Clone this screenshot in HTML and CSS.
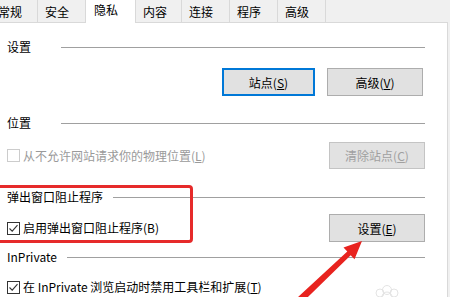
FILE: index.html
```html
<!DOCTYPE html>
<html lang="zh-CN">
  <head>
    <meta charset="UTF-8" />
    <meta name="viewport" content="width=device-width, initial-scale=1.0" />
    <title>Internet 选项 - 隐私</title>
    <link rel="stylesheet" href="styles.css">
  </head>
  <body>
    <div class="tabs">
      <div class="tab first">常规</div>
      <div class="tab">安全</div>
      <div class="tab active">隐私</div>
      <div class="tab narrow">内容</div>
      <div class="tab">连接</div>
      <div class="tab">程序</div>
      <div class="tab">高级</div>
    </div>

    <div class="panel">
      <!-- 设置 -->
      <div class="group group-settings">
        <div class="group-title"><span>设置</span><i class="rule"></i></div>
        <div class="row end">
          <button class="btn focused">站点(<u>S</u>)</button>
          <button class="btn wide">高级(<u>V</u>)</button>
        </div>
      </div>

      <!-- 位置 -->
      <div class="group group-location">
        <div class="group-title"><span>位置</span><i class="rule"></i></div>
        <div class="row">
          <label class="check disabled"><span class="box"></span><span>从不允许网站请求你的物理位置(<u>L</u>)</span></label>
          <button class="btn wide disabled short">清除站点(<u>C</u>)</button>
        </div>
      </div>

      <!-- 弹出窗口阻止程序 -->
      <div class="group group-popup">
        <div class="group-title"><span>弹出窗口阻止程序</span><i class="rule"></i></div>
        <div class="row">
          <label class="check"><span class="box"><svg viewBox="0 0 13 13" width="13" height="13"><path d="M2.5 6.5 L5.2 9.2 L10.5 3.2" fill="none" stroke="#333" stroke-width="1.1"/></svg></span><span>启用弹出窗口阻止程序(B)</span></label>
          <button class="btn wide">设置(<u>E</u>)</button>
        </div>
      </div>

      <!-- InPrivate -->
      <div class="group group-private">
        <div class="group-title"><span>InPrivate</span><i class="rule"></i></div>
        <div class="row line">
          <label class="check"><span class="box"><svg viewBox="0 0 13 13" width="13" height="13"><path d="M2.5 6.5 L5.2 9.2 L10.5 3.2" fill="none" stroke="#333" stroke-width="1.1"/></svg></span><span>在 InPrivate 浏览启动时禁用工具栏和扩展(<u>T</u>)</span></label>
        </div>
      </div>
    </div>

    <!-- annotations drawn over the screenshot -->
    <div class="highlight"></div>
    <svg class="marks" viewBox="0 0 450 297" width="450" height="297">
      <polygon points="362,241 343.5,247.6 347.3,251.6 297.5,297.5 302.3,302.5 350.7,255.2 354.5,259.2" fill="#e8231f"/>
      <g fill="none" stroke="#e4e4e4" stroke-width="1">
        <circle cx="380" cy="293" r="4"/>
        <circle cx="387" cy="290" r="4.5"/>
        <circle cx="394" cy="293" r="4"/>
        <circle cx="387" cy="297" r="5"/>
      </g>
    </svg>
  </body>
</html>
```

FILE: styles.css
```css
body {
  margin: 0;
  width: 450px;
  height: 297px;
  overflow: hidden;
  position: relative;
  background-color: #f0f0f0;
  font-family: "Noto Sans CJK SC", "Microsoft YaHei", sans-serif;
  font-size: 12px;
  color: #000;
}

.tabs {
  display: flex;
  align-items: flex-end;
  height: 22px;
  margin-left: -9px;
}

.tab {
  box-sizing: border-box;
  width: 48px;
  height: 22px;
  padding: 2px 0 0 7px;
  line-height: 20px;
  background-color: #f0f0f0;
  border-right: 1px solid #d9d9d9;
}

.tab.first {
  width: 47px;
}

.tab.narrow {
  width: 46px;
}

.tab.active {
  width: 50px;
  height: 23px;
  padding: 0 0 0 8px;
  margin-bottom: -1px;
  line-height: 20px;
  background-color: #fff;
  position: relative;
  z-index: 1;
}

.panel {
  box-sizing: border-box;
  width: 448px;
  height: 275px;
  background-color: #fff;
  border-top: 1px solid #d9d9d9;
  border-right: 1px solid #d9d9d9;
  padding: 14px 22px 0 7px;
}

.group-title {
  display: flex;
  align-items: center;
  height: 20px;
  line-height: 20px;
}

.group-title span {
  min-width: 44px;
  margin-right: 10px;
}

.rule {
  flex: 1;
  height: 1px;
  background-color: #a0a0a0;
}

.row {
  display: flex;
  align-items: center;
  justify-content: space-between;
}

.row.end {
  justify-content: flex-end;
  gap: 12px;
}

.group-settings .row {
  margin-top: 11px;
  margin-right: 2px;
}

.group-location {
  margin-top: 17px;
}

.group-location .row {
  margin-top: 9px;
}

.group-popup {
  margin-top: 18px;
}

.group-popup .row {
  margin-top: 7px;
}

.group-private {
  margin-top: 5px;
}

.group-private .row {
  margin-top: 10px;
  height: 20px;
}

.check {
  display: flex;
  align-items: center;
  gap: 3px;
  line-height: 16px;
}

.check.disabled {
  color: #9a9a9a;
}

.box {
  box-sizing: border-box;
  width: 13px;
  height: 13px;
  border: 1px solid #333;
  background-color: #fff;
  display: flex;
  align-items: center;
  justify-content: center;
}

.box svg {
  flex: none;
}

.check.disabled .box {
  border-color: #cccccc;
}

.btn {
  box-sizing: border-box;
  width: 93px;
  height: 28px;
  padding: 0;
  font-family: inherit;
  font-size: 12px;
  color: #000;
  background-color: #e1e1e1;
  border: 1px solid #adadad;
}

.btn.wide {
  width: 96px;
}

.btn.short {
  height: 27px;
}

.btn.focused {
  border: 2px solid #0078d7;
}

.btn.disabled {
  color: #a0a0a0;
  background-color: #e2e2e2;
  border-color: #c4c4c4;
}

.highlight {
  position: absolute;
  left: -6px;
  top: 185px;
  width: 193px;
  height: 52px;
  border: 3px solid #e62a2a;
  border-radius: 4px;
}

.marks {
  position: absolute;
  left: 0;
  top: 0;
  pointer-events: none;
}
```
